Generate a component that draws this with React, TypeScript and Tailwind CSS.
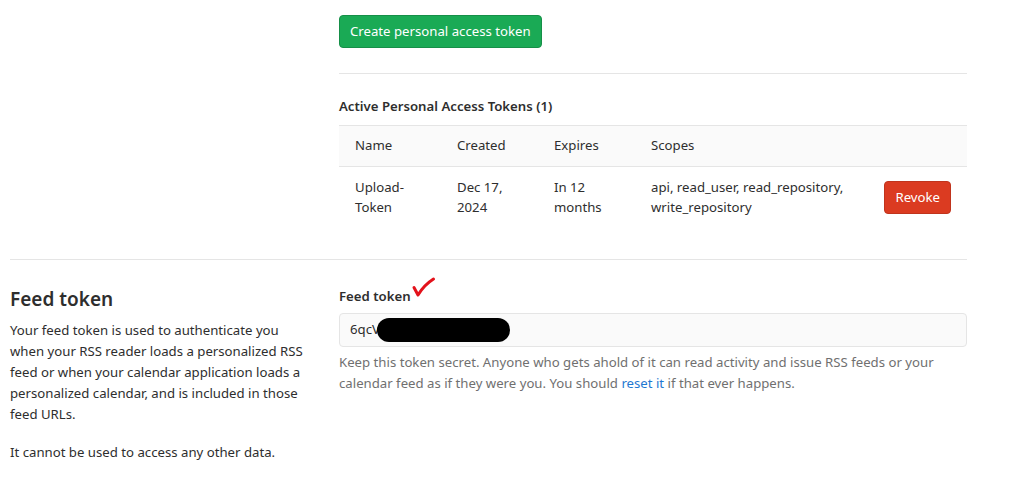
import React from 'react';

const App: React.FC = () => {
  return (
    <div className="min-h-[501px] w-[1017px] bg-white text-[13.2px] text-[#2e2e2e]" style={{ fontFamily: '"Noto Sans", "Open Sans", sans-serif' }}>
      <div className="pl-[339px] pr-[50px] pt-[15px]">
        <button className="h-[33px] rounded-[4px] border border-[#168f48] bg-[#1aaa55] px-[10px] leading-none text-white">
          Create personal access token
        </button>
        <div className="mt-[25px] border-t border-[#e5e5e5]" />
        <h5 className="mt-[22px] font-semibold leading-[20px]">Active Personal Access Tokens (1)</h5>
        <table className="mt-[9px] w-full table-fixed border-collapse text-left">
          <colgroup>
            <col className="w-[118px]" />
            <col className="w-[97px]" />
            <col className="w-[97px]" />
            <col />
            <col className="w-[100px]" />
          </colgroup>
          <thead>
            <tr className="h-[41px] border-y border-[#e5e5e5] bg-[#fafafa]">
              <th className="pl-[16px] font-normal">Name</th>
              <th className="font-normal">Created</th>
              <th className="font-normal">Expires</th>
              <th className="font-normal">Scopes</th>
              <th />
            </tr>
          </thead>
          <tbody>
            <tr className="h-[61px] align-middle leading-[20px]">
              <td className="pl-[16px]">Upload-<br />Token</td>
              <td>Dec 17,<br />2024</td>
              <td>In 12<br />months</td>
              <td>api, read_user, read_repository,<br />write_repository</td>
              <td className="pr-[16px] text-right">
                <button className="h-[33px] rounded-[4px] border border-[#c0341d] bg-[#db3b21] px-[10px] text-white">Revoke</button>
              </td>
            </tr>
          </tbody>
        </table>
      </div>

      <div className="ml-[10px] mr-[50px] mt-[31px] border-t border-[#e5e5e5]" />

      <div className="flex pl-[10px] pr-[50px] pt-[26px]">
        <div className="w-[300px] shrink-0">
          <h4 className="text-[19px] font-semibold leading-[26px]">Feed token</h4>
          <p className="mt-[8px] leading-[21px]">
            Your feed token is used to authenticate you when your RSS reader loads a personalized RSS feed or when your calendar application loads a personalized calendar, and is included in those feed URLs.
          </p>
          <p className="mt-[17px] leading-[21px]">It cannot be used to access any other data.</p>
        </div>
        <div className="ml-[29px] flex-1">
          <label className="relative block w-fit font-semibold leading-[20px]">
            Feed token
            <svg width="26" height="24" viewBox="0 0 26 24" className="absolute left-full top-[-10px]">
              <path d="M3 11.5 L7 19 Q13 9 22.5 3" fill="none" stroke="#e3121b" strokeWidth="3" strokeLinecap="round" strokeLinejoin="round" />
            </svg>
          </label>
          <div className="mt-[7px] flex h-[34px] items-center rounded-[4px] border border-[#e5e5e5] bg-[#fafafa] px-[10px]">
            <span>6qcV</span>
            <span className="-ml-[3px] h-[24px] w-[133px] rounded-full bg-black" />
          </div>
          <p className="mt-[5px] leading-[21px] text-[#707070]">
            Keep this token secret. Anyone who gets ahold of it can read activity and issue RSS feeds or your calendar feed as if they were you. You should <a className="text-[#1f78d1]">reset it</a> if that ever happens.
          </p>
        </div>
      </div>
    </div>
  );
};

export default App;
